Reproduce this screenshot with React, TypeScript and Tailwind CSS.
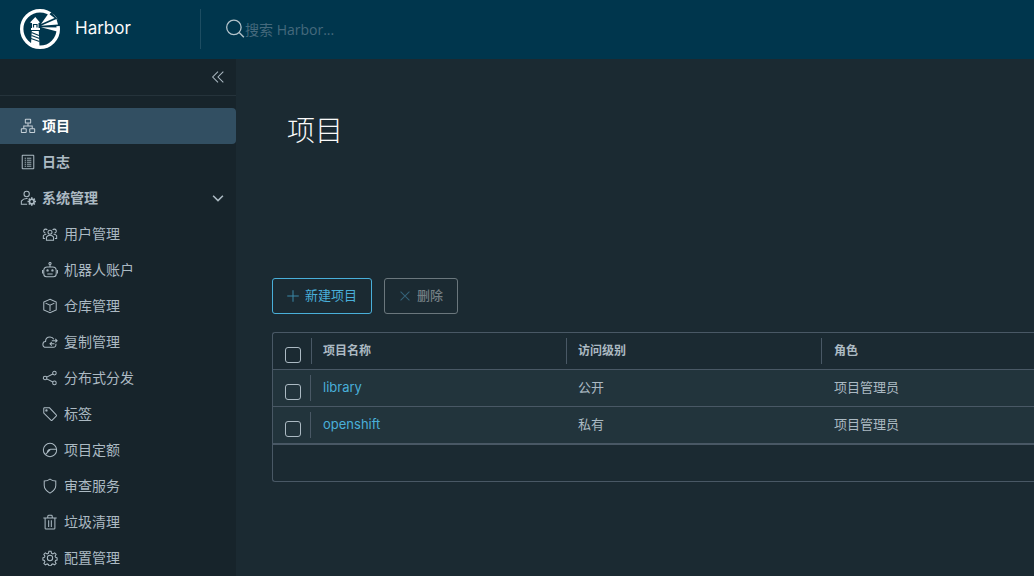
import React from 'react';

interface IconProps {
  children: React.ReactNode;
  className?: string;
}

const Icon: React.FC<IconProps> = ({ children, className = 'size-4' }) => (
  <svg
    viewBox="0 0 36 36"
    fill="none"
    stroke="currentColor"
    strokeWidth="2.3"
    aria-hidden="true"
    className={`shrink-0 ${className}`}
  >
    {children}
  </svg>
);

const icons = {
  projects: (
    <>
      <rect x="12" y="3" width="12" height="8.500" rx="1" />
      <rect x="3" y="24" width="11" height="8.500" rx="1" />
      <rect x="22" y="24" width="11" height="8.500" rx="1" />
      <path d="M18 12v6M8.500 24v-6h19v6" />
    </>
  ),
  logs: (
    <>
      <rect x="5" y="3" width="26" height="30" rx="1" />
      <path
        d="M10.500 9.500h3M15.500 9.500h10M10.500 14h3M15.500 14h10M10.500 18.500h3M15.500 18.500h10M10.500 23h3M15.500 23h10M10.500 27.500h3M15.500 27.500h10"
        strokeWidth="2"
      />
    </>
  ),
  admin: (
    <>
      <circle cx="15" cy="9" r="6" />
      <path d="M16 32H3v-7c3-4 7-6 12-6h2" />
      <circle cx="26.500" cy="26" r="5.200" strokeWidth="3.600" />
      <path
        d="M26.500 16.500v4M26.500 31.500v4M17 26h4M32 26h4M19.800 19.300l2.800 2.800M30.400 29.900l2.800 2.800M33.200 19.300l-2.800 2.800M22.600 29.900l-2.800 2.800"
        strokeWidth="3.600"
      />
    </>
  ),
  users: (
    <>
      <circle cx="18" cy="14" r="4.500" />
      <path d="M10 32v-7c2-3 5-4 8-4s6 1 8 4v7z" />
      <path d="M12 9a4.500 4.500 0 1 0-4 7M24 9a4.500 4.500 0 1 1 4 7M7 28H3v-6c1-2 4-3.500 7-3.500M29 28h4v-6c-1-2-4-3.500-7-3.500" />
    </>
  ),
  robot: (
    <>
      <circle cx="18" cy="3.500" r="2.500" />
      <path d="M18 6v5M12 11h12a8 8 0 0 1 8 8v8a6 6 0 0 1-6 6H10a6 6 0 0 1-6-6v-8a8 8 0 0 1 8-8zM1 18v8M35 18v8M12 27h12" />
      <circle cx="12.500" cy="19" r="1.500" />
      <circle cx="23.500" cy="19" r="1.500" />
    </>
  ),
  box: (
    <path d="M18 3l14 6v18l-14 6-14-6V9zM8 11.500l10 4.500 10-4.500M18 16v13" />
  ),
  cloud: (
    <>
      <path d="M31 22c1.500 4-1 8-6 8H9c-4 0-7-3-7-6.500C2 20 5 17 8 17c0-6 4-10 10-10 4 0 7 2 8.500 5" />
      <path d="M22 15h12M30 11l4 4-4 4M28 22H18M22 18l-4 4 4 4" />
    </>
  ),
  share: (
    <>
      <circle cx="7" cy="18" r="4" />
      <circle cx="28" cy="7" r="4" />
      <circle cx="28" cy="29" r="4" />
      <path d="M10.500 16L24.500 9M10.500 20l14 7" />
    </>
  ),
  tag: (
    <>
      <path d="M4 5v11l16 16c1 1 2 1 3 0l9-9c1-1 1-2 0-3L17 4H5z" />
      <circle cx="10" cy="10" r="1.500" />
    </>
  ),
  quota: (
    <>
      <circle cx="18" cy="18" r="15" />
      <path d="M33 16.500H19L8 28M20 16.500c-4 0-7 2-8 6" />
    </>
  ),
  shield: (
    <path d="M18 2.500c4 3 8 4.500 13 4.500v10c0 8-6 13-13 17C11 30 5 25 5 17V7c5 0 9-1.500 13-4.500z" />
  ),
  trash: (
    <path d="M3 9h30M7 9v23c0 1 .5 2 2 2h18c1.500 0 2-1 2-2V9M13 9V5c0-1 .5-2 2-2h6c1.500 0 2 1 2 2v4M15 14v15M21 14v15" />
  ),
  gear: (
    <>
      <circle cx="18" cy="18" r="6" />
      <path d="M15.500 3h5l1 4.500 3 1.300 4-2.400 3.300 3.500-2.400 3.900 1.200 2.700 3.400 1v5l-3.400 1-1.200 2.900 2.400 3.800-3.500 3.400-3.900-2.300-2.900 1.200-1 3h-5l-1-3-2.900-1.200-3.900 2.300-3.500-3.400 2.400-3.800-1.200-2.900-3.400-1v-5l3.400-1 1.200-2.700-2.400-3.900L7.500 6.400l4 2.400 3-1.300z" />
    </>
  ),
};

const adminItems = [
  { label: '用户管理', icon: icons.users },
  { label: '机器人账户', icon: icons.robot },
  { label: '仓库管理', icon: icons.box },
  { label: '复制管理', icon: icons.cloud },
  { label: '分布式分发', icon: icons.share },
  { label: '标签', icon: icons.tag },
  { label: '项目定额', icon: icons.quota },
  { label: '审查服务', icon: icons.shield },
  { label: '垃圾清理', icon: icons.trash },
  { label: '配置管理', icon: icons.gear },
];

const projects = [
  { name: 'library', access: '公开', role: '项目管理员' },
  { name: 'openshift', access: '私有', role: '项目管理员' },
];

const Logo: React.FC = () => (
  <svg viewBox="0 0 40 40" className="size-10 shrink-0" aria-hidden="true">
    <circle cx="20" cy="20" r="18.300" fill="none" stroke="#fff" strokeWidth="3.400" />
    {/* dark cone that cuts the ring, with the light beams over it */}
    <path d="M20 15.500L31.500 3 40 13v4L20 18z" fill="#00364d" />
    <path d="M21 15L28.500 4.500l6 4.500z" fill="#fff" />
    <path d="M21 16.800L36.500 10l1.500 5.500z" fill="#fff" />
    <path d="M21 18.300l18 .2v4.500z" fill="#fff" />
    {/* lighthouse */}
    <path d="M10.500 13l4.800-5 4.200 5v1h-1v5h1.500v2h-9v-2h1v-5h-1.500z" fill="#fff" />
    <path d="M13.500 18.500v-3h3.500v3" fill="none" stroke="#00364d" strokeWidth="1.200" />
    <path d="M11.800 22h7l.7 16-8.500-3z" fill="#fff" />
    <path
      d="M11.500 23.500l7.500 3M11.500 26.500l8 3M11 29.500l8.500 3"
      stroke="#00364d"
      strokeWidth="1.100"
    />
  </svg>
);

const Header: React.FC = () => (
  <header className="flex h-[59px] items-center bg-[#00364d] pb-px">
    <a href="#" className="flex w-50 items-center gap-[15px] pl-5 text-[17px] text-[#fafafa]">
      <Logo />
      <span>Harbor</span>
    </a>
    <div className="flex h-10 flex-1 items-center border-l border-[#1d4d62] pl-6 text-[#b3c3cb]">
      <Icon className="size-5">
        <circle cx="16" cy="15" r="13" />
        <path d="M25.500 24.500L34 33" strokeWidth="2.500" />
      </Icon>
      <input
        type="text"
        aria-label="搜索 Harbor"
        placeholder="搜索 Harbor..."
        className="w-60 bg-transparent pt-px font-['Open_Sans','Noto_Sans_CJK_SC',sans-serif] text-sm outline-none placeholder:text-[#45697c]"
      />
    </div>
  </header>
);

const Sidebar: React.FC = () => (
  <nav className="w-[236px] shrink-0 bg-[#17242b] text-sm text-[#acbac3]">
    <div className="mb-3 flex h-[37px] items-center justify-end border-b border-[#25333b] pr-[10px]">
      <button type="button" aria-label="折叠">
        <Icon>
          <path d="M18 6L6 18l12 12M30 6L18 18l12 12" />
        </Icon>
      </button>
    </div>
    <a
      href="#"
      className="flex h-9 items-center gap-[6px] rounded-r bg-[#324f62] pl-5 font-bold text-white"
    >
      <Icon className="size-4 text-[#c5d0d7]">{icons.projects}</Icon>
      项目
    </a>
    <a href="#" className="flex h-9 items-center gap-[6px] pl-5 font-semibold">
      <Icon>{icons.logs}</Icon>
      日志
    </a>
    <button
      type="button"
      className="flex h-9 w-full items-center gap-[6px] pr-[10px] pl-5 font-semibold"
    >
      <Icon>{icons.admin}</Icon>
      系统管理
      <Icon className="ml-auto size-4">
        <path d="M7 13l11 11 11-11" strokeWidth="3.500" />
      </Icon>
    </button>
    <ul>
      {adminItems.map((item) => (
        <li key={item.label}>
          <a href="#" className="flex h-9 items-center gap-[6px] pl-[42px]">
            <Icon>{item.icon}</Icon>
            {item.label}
          </a>
        </li>
      ))}
    </ul>
  </nav>
);

const CheckCell: React.FC<{ label: string }> = ({ label }) => (
  <div className="flex h-[26px] items-end border-r border-[#495865] pb-px pl-3">
    <input
      type="checkbox"
      aria-label={label}
      className="size-4 appearance-none rounded-[3px] border border-[#acbac3]"
    />
  </div>
);

const ProjectTable: React.FC = () => (
  <div className="mt-[18px] rounded-l-[3px] border border-r-0 border-[#495865]">
    <table className="w-full table-fixed border-separate border-spacing-0 text-left text-[13px]">
      <thead>
        <tr className="text-xs">
          <th className="h-[37px] w-[39px] border-b border-[#495865] p-0">
            <CheckCell label="全选" />
          </th>
          <th className="w-[255px] border-b border-[#495865] p-0">
            <div className="flex h-[26px] items-center border-r border-[#495865] pl-[11px]">项目名称</div>
          </th>
          <th className="w-[255px] border-b border-[#495865] p-0">
            <div className="flex h-[26px] items-center border-r border-[#495865] pl-[11px]">访问级别</div>
          </th>
          <th className="border-b border-[#495865] p-0 pl-3">角色</th>
        </tr>
      </thead>
      <tbody className="bg-[#22343c]">
        {projects.map((project) => (
          <tr key={project.name}>
            <td className="h-[37px] border-b border-[#495865] p-0 pr-px">
              <CheckCell label={project.name} />
            </td>
            <td className="border-b border-[#495865] p-0 pl-[11px]">
              <a href="#" className="text-[#49afd9]">
                {project.name}
              </a>
            </td>
            <td className="border-b border-[#495865] p-0 pl-[11px]">{project.access}</td>
            <td className="border-b border-[#495865] p-0 pl-3">{project.role}</td>
          </tr>
        ))}
      </tbody>
    </table>
    <div className="h-[37px] border-t border-[#495865]" />
  </div>
);

const App: React.FC = () => {
  return (
    <div className="flex h-screen flex-col overflow-hidden bg-[#1b2a32] font-['Inter','Noto_Sans_CJK_SC',sans-serif] text-[#acbac3]">
      <Header />
      <div className="flex min-h-0 flex-1">
        <Sidebar />
        <main className="min-w-0 flex-1 pt-[51px] pl-9">
          <h1 className="pl-[15px] text-[28px] leading-[42px] font-light text-[#fafafa]">项目</h1>
          <div className="mt-[126px] flex gap-3 text-[13px]">
            <button
              type="button"
              className="flex h-9 items-center gap-1 rounded-[3px] border border-[#49afd9] pr-[14px] pl-3 text-[#49afd9]"
            >
              <Icon className="size-4 opacity-70">
                <path d="M18 5v26M5 18h26" />
              </Icon>
              新建项目
            </button>
            <button
              type="button"
              disabled
              className="flex h-9 items-center gap-1 rounded-[3px] border border-[#6b777d] pr-[14px] pl-3 font-medium text-[#747f84]"
            >
              <Icon className="size-4 text-[#346279]">
                <path d="M8 8l20 20M28 8L8 28" />
              </Icon>
              删除
            </button>
          </div>
          <ProjectTable />
        </main>
      </div>
    </div>
  );
};

export default App;
